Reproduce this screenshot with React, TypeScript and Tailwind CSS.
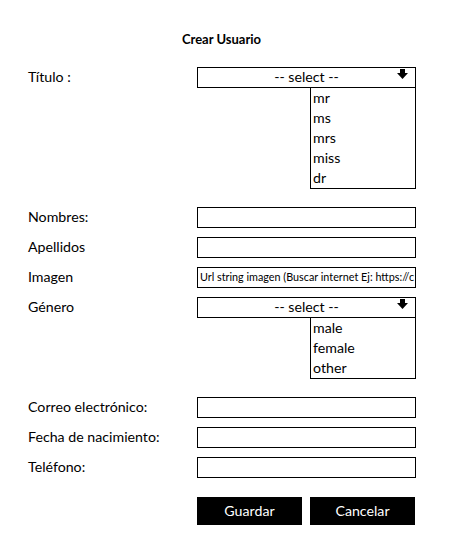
import React from "react";

function Arrow() {
  return (
    <svg width="11" height="10" viewBox="0 0 11 10" className="absolute right-[7px] top-[1px]">
      <rect x="3" y="0" width="5" height="5" fill="#000" />
      <polygon points="0,4 11,4 5.5,10" fill="#000" />
    </svg>
  );
}

function Label({ children }: { children: React.ReactNode }) {
  return (
    <div className="w-[169px] h-[21px] flex items-center text-[14.2px] leading-none shrink-0">
      {children}
    </div>
  );
}

function Input({ placeholder }: { placeholder?: string }) {
  return (
    <div className="w-[219px] h-[21px] border border-black flex items-center pl-[2px] overflow-hidden whitespace-nowrap text-[10.8px] leading-none">
      {placeholder}
    </div>
  );
}

function SelectField({ items }: { items: string[] }) {
  return (
    <div className="w-[219px] flex flex-col">
      <div className="relative h-[21px] border border-black flex items-center justify-center text-[14.2px] leading-none">
        -- select --
        <Arrow />
      </div>
      <div className="self-end w-[106px] border border-t-0 border-black flex flex-col">
        {items.map((it) => (
          <div key={it} className="h-[20px] flex items-center pl-[2px] text-[14.2px] leading-none">
            {it}
          </div>
        ))}
      </div>
    </div>
  );
}

export default function App() {
  return (
    <div className="w-[450px] h-[546px] bg-white text-black font-['Lato','Noto_Sans',sans-serif]">
      <div className="pl-[28px] pt-[30px]">
        <div className="w-[387px] text-center text-[13px] font-bold leading-[18px]">Crear Usuario</div>
        <div className="mt-[19px] flex items-start">
          <Label>Título :</Label>
          <SelectField items={["mr", "ms", "mrs", "miss", "dr"]} />
        </div>
        <div className="mt-[18px] flex flex-col gap-[9px]">
          <div className="flex items-start">
            <Label>Nombres:</Label>
            <Input />
          </div>
          <div className="flex items-start">
            <Label>Apellidos</Label>
            <Input />
          </div>
          <div className="flex items-start">
            <Label>Imagen</Label>
            <Input placeholder="Url string imagen (Buscar internet Ej: https://c" />
          </div>
          <div className="flex items-start">
            <Label>Género</Label>
            <SelectField items={["male", "female", "other"]} />
          </div>
        </div>
        <div className="mt-[18px] flex flex-col gap-[9px]">
          <div className="flex items-start">
            <Label>Correo electrónico:</Label>
            <Input />
          </div>
          <div className="flex items-start">
            <Label>Fecha de nacimiento:</Label>
            <Input />
          </div>
          <div className="flex items-start">
            <Label>Teléfono:</Label>
            <Input />
          </div>
        </div>
        <div className="mt-[19px] flex">
          <div className="w-[169px] shrink-0" />
          <div className="flex gap-[8px]">
            <div className="w-[105px] h-[28px] bg-black text-white flex items-center justify-center text-[14.2px] leading-none">Guardar</div>
            <div className="w-[105px] h-[28px] bg-black text-white flex items-center justify-center text-[14.2px] leading-none">Cancelar</div>
          </div>
        </div>
      </div>
    </div>
  );
}
